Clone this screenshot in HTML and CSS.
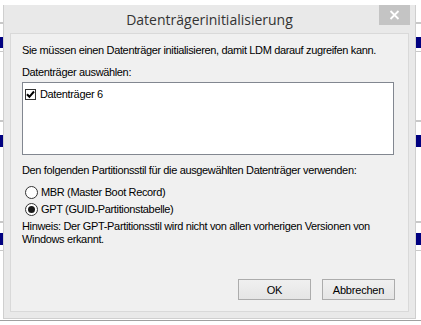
FILE: index.html
```html
<!DOCTYPE html>
<html lang="de">
<head>
  <meta charset="UTF-8">
  <title>Datenträgerinitialisierung</title>
  <link rel="stylesheet" href="styles.css">
</head>
<body>

  <div class="desk">
    <div class="dialog">
      <div class="titlebar">
        <span class="title">Datenträgerinitialisierung</span>
        <span class="close">
          <svg width="11" height="10" viewBox="0 0 11 10">
            <path d="M1.5 1 L9.5 9 M9.5 1 L1.5 9" stroke="#fff" stroke-width="1.8"/>
          </svg>
        </span>
      </div>

      <div class="content">
        <p class="intro">Sie müssen einen Datenträger initialisieren, damit LDM darauf zugreifen kann.</p>

        <p class="label">Datenträger auswählen:</p>
        <div class="listbox">
          <div class="item">
            <span class="check">
              <svg width="9" height="9" viewBox="0 0 9 9">
                <path d="M1 4.2 L3.4 6.8 L8 1.5" stroke="#000" stroke-width="2" fill="none"/>
              </svg>
            </span>
            Datenträger 6
          </div>
        </div>

        <p class="label style">Den folgenden Partitionsstil für die ausgewählten Datenträger verwenden:</p>
        <div class="radios">
          <div class="radio"><span class="dot"></span>MBR (Master Boot Record)</div>
          <div class="radio"><span class="dot on"></span>GPT (GUID-Partitionstabelle)</div>
        </div>

        <p class="note">Hinweis: Der GPT-Partitionsstil wird nicht von allen vorherigen Versionen von Windows erkannt.</p>

        <div class="buttons">
          <button>OK</button>
          <button>Abbrechen</button>
        </div>
      </div>
    </div>
  </div>

</body>
</html>
```

FILE: styles.css
```css
body {
  margin: 0;
  background-color: #fff;
  font-family: "Liberation Sans", Arial, sans-serif;
  font-size: 11px;
  line-height: 13px;
  letter-spacing: -0.35px;
  color: #000;
}

.desk {
  width: 421px;
  height: 325px;
  overflow: hidden;
  box-sizing: border-box;
  padding: 5px 5px 0 3px;
  background:
    linear-gradient(#c8c8c8, #c8c8c8) 0 22px / 100% 2px no-repeat,
    linear-gradient(#000080, #000080) 0 37px / 100% 11px no-repeat,
    linear-gradient(#c8c8c8, #c8c8c8) 0 51px / 100% 1px no-repeat,
    linear-gradient(#c8c8c8, #c8c8c8) 0 120px / 100% 2px no-repeat,
    linear-gradient(#000080, #000080) 0 135px / 100% 12px no-repeat,
    linear-gradient(#c8c8c8, #c8c8c8) 0 221px / 100% 2px no-repeat,
    linear-gradient(#000080, #000080) 0 233px / 100% 12px no-repeat,
    linear-gradient(#c8c8c8, #c8c8c8) 0 250px / 100% 1px no-repeat,
    linear-gradient(#a0a0a0, #a0a0a0) 0 320px / 100% 1px no-repeat,
    #fff;
}

.dialog {
  width: 413px;
  height: 314px;
  box-sizing: border-box;
  background-color: #e9e9e9;
  border: 1px solid #cfcfcf;
  border-top: none;
  padding: 0 6px 6px 6px;
  display: flex;
  flex-direction: column;
}

.titlebar {
  height: 28px;
  position: relative;
  display: flex;
  justify-content: center;
  align-items: center;
}

.title {
  font-family: "Open Sans", "Noto Sans", sans-serif;
  font-size: 14px;
  letter-spacing: 0;
  color: #333;
  margin-top: 1px;
}

.close {
  position: absolute;
  right: -1px;
  top: 0;
  width: 31px;
  height: 20px;
  background-color: #c4c4c4;
  display: flex;
  justify-content: center;
  align-items: center;
}

.content {
  flex: 1;
  background-color: #f0f0f0;
  border: 1px solid #d9d9d9;
  padding: 10px 0 0 11px;
  display: flex;
  flex-direction: column;
}

p {
  margin: 0;
}

.intro {
  margin-bottom: 9px;
}

.label {
  margin-bottom: 3px;
}

.listbox {
  width: 372px;
  height: 73px;
  background-color: #fff;
  border: 1px solid #828790;
  box-sizing: border-box;
  padding: 5px 2px;
}

.item {
  display: flex;
  align-items: center;
  gap: 4px;
}

.check {
  width: 11px;
  height: 11px;
  box-sizing: border-box;
  border: 1px solid #333;
  background-color: #fff;
  display: flex;
  justify-content: center;
  align-items: center;
}

.style {
  margin-top: 9px;
  margin-bottom: 9px;
}

.radios {
  display: flex;
  flex-direction: column;
  gap: 4px;
  padding-left: 3px;
}

.radio {
  display: flex;
  align-items: center;
  gap: 3px;
}

.dot {
  width: 13px;
  height: 13px;
  box-sizing: border-box;
  border: 1px solid #333;
  border-radius: 50%;
  background-color: #fff;
  display: flex;
  justify-content: center;
  align-items: center;
}

.dot.on::after {
  content: "";
  width: 7px;
  height: 7px;
  border-radius: 50%;
  background-color: #1a1a1a;
}

.note {
  margin-top: 4px;
  width: 372px;
}

.buttons {
  margin-top: auto;
  margin-bottom: 11px;
  display: flex;
  justify-content: flex-end;
  gap: 11px;
  padding-right: 13px;
}

button {
  width: 73px;
  height: 21px;
  font-family: "Liberation Sans", Arial, sans-serif;
  font-size: 11px;
  letter-spacing: -0.2px;
  color: #000;
  background: linear-gradient(#f0f0f0, #e5e5e5);
  border: 1px solid #acacac;
  border-radius: 0;
  padding: 0;
}
```
